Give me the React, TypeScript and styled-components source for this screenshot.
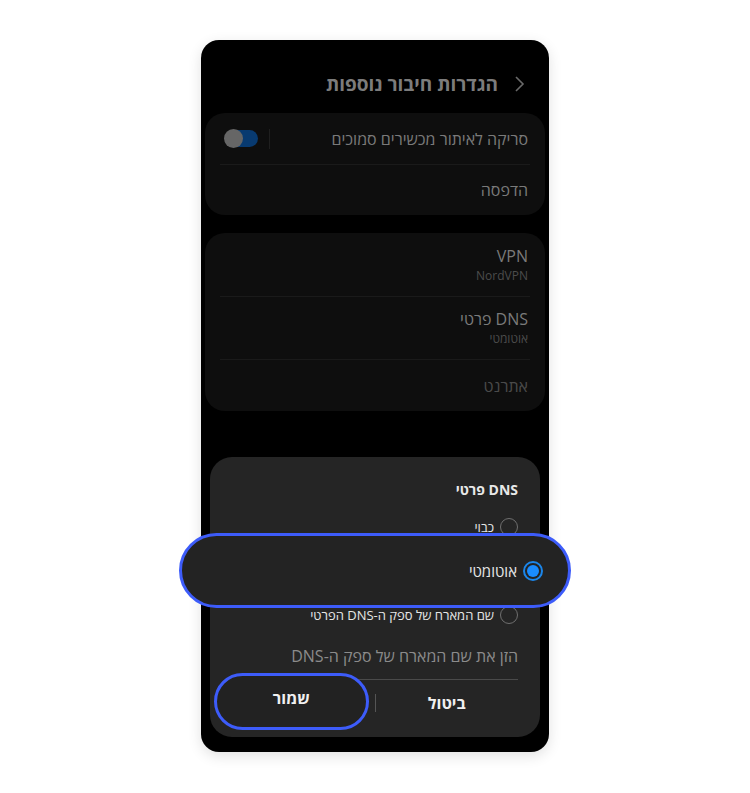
import styled, { createGlobalStyle } from 'styled-components';

const GlobalStyle = createGlobalStyle`
    html, body {
        margin: 0;
        padding: 0;
        background: #ffffff;
    }
    body {
        font-family: 'Open Sans', 'Liberation Sans', 'DejaVu Sans', sans-serif;
    }
`

const Page = styled.div`
    width: 750px;
    height: 793px;
    display: flex;
    justify-content: center;
    padding-top: 40px;
    box-sizing: border-box;
`

const Phone = styled.div`
    width: 348px;
    height: 712px;
    background: #000;
    border-radius: 18px;
    box-shadow: 0 4px 14px rgba(0,0,0,.12);
    direction: rtl;
    display: flex;
    flex-direction: column;
    padding: 28px 4px 15px;
    box-sizing: border-box;
`

const Header = styled.div`
    height: 32px;
    display: flex;
    align-items: center;
    gap: 16px;
    padding-right: 19px;
    margin-bottom: 13px;
`

const HeaderTitle = styled.h1`
    margin: 0;
    font-size: 19px;
    font-weight: 700;
    color: #7c7c7c;
`

const Card = styled.div<{ mb: number }>`
    background: #0e0e0e;
    border-radius: 20px;
    padding: 0 15px;
    margin-bottom: ${props => props.mb}px;
`

const Row = styled.div<{ h: number; last?: boolean }>`
    height: ${props => props.h}px;
    display: flex;
    align-items: center;
    padding: 0 2px 0 5px;
    border-bottom: ${props => props.last ? 'none' : '1px solid #1a1a1a'};
`

const RowText = styled.div`
    flex: 1;
    display: flex;
    flex-direction: column;
    gap: 4px;
`

const RowTitle = styled.span<{ dim?: boolean }>`
    font-size: 16px;
    line-height: 18px;
    color: ${props => props.dim ? '#4a4a4a' : '#7a7a7a'};
`

const RowSub = styled.span`
    font-size: 12px;
    line-height: 14px;
    color: #4c4c4c;
`

const SwitchArea = styled.div`
    display: flex;
    align-items: center;
    gap: 11px;
`

const VSep = styled.div`
    width: 1px;
    height: 20px;
    background: #1f1f1f;
`

const Track = styled.div`
    width: 33px;
    height: 17px;
    border-radius: 9px;
    background: #083a70;
    position: relative;
`

const Thumb = styled.div`
    position: absolute;
    left: -1px;
    top: -1px;
    width: 19px;
    height: 19px;
    border-radius: 50%;
    background: #666;
`

const Sheet = styled.div`
    margin: auto 5px 0;
    height: 280px;
    background: #252525;
    border-radius: 22px;
    padding: 20px 22px 0 22px;
    box-sizing: border-box;
    display: flex;
    flex-direction: column;
`

const SheetTitle = styled.div`
    font-size: 14px;
    font-weight: 700;
    color: #e8e8e8;
    height: 24px;
    display: flex;
    align-items: center;
    margin-bottom: 4px;
`

const Option = styled.div`
    height: 44px;
    display: flex;
    align-items: center;
    gap: 6px;
    position: relative;
`

const Radio = styled.div<{ big?: boolean; on?: boolean }>`
    width: ${props => props.big ? 20 : 18}px;
    height: ${props => props.big ? 20 : 18}px;
    border-radius: 50%;
    box-sizing: border-box;
    border: ${props => props.on ? '2px solid #1b86ea' : '1.5px solid #6f6f6f'};
    display: flex;
    align-items: center;
    justify-content: center;
    &::after {
        content: '';
        display: ${props => props.on ? 'block' : 'none'};
        width: 12px;
        height: 12px;
        border-radius: 50%;
        background: #1a8cff;
    }
`

const OptionLabel = styled.span<{ big?: boolean }>`
    font-size: ${props => props.big ? 15 : 13}px;
    color: #e6e6e6;
`

const Callout = styled.div`
    position: absolute;
    right: -53px;
    left: -53px;
    top: -16px;
    bottom: -15px;
    background: #232323;
    border: 3px solid #3d5cfa;
    border-radius: 40px;
    display: flex;
    align-items: center;
    gap: 6px;
    padding-right: 25px;
    z-index: 2;
`

const Input = styled.div`
    height: 43px;
    border-bottom: 1px solid #4a4a4a;
    display: flex;
    align-items: center;
    font-size: 16px;
    color: #8b8b8b;
    padding-bottom: 4px;
    box-sizing: border-box;
`

const Buttons = styled.div`
    flex: 1;
    display: grid;
    grid-template-columns: 1fr 1px 1fr;
    align-items: center;
    padding-bottom: 12px;
`

const ActionButton = styled.button`
    background: transparent;
    border: none;
    color: #f0f0f0;
    font-family: inherit;
    font-size: 16px;
    font-weight: 700;
    height: 40px;
    position: relative;
`

const ButtonSep = styled.div`
    width: 1px;
    height: 18px;
    background: #555;
`

const ButtonHighlight = styled.div`
    position: absolute;
    left: -18px;
    right: 6px;
    top: -10px;
    bottom: -7px;
    border: 3px solid #3d5cfa;
    border-radius: 30px;
    background: #222;
    display: flex;
    align-items: center;
    justify-content: center;
    padding-bottom: 6px;
    box-sizing: border-box;
`

const Chevron = () => (
    <svg width="12" height="18" viewBox="0 0 12 18">
        <path d="M2 2 L9 9 L2 16" fill="none" stroke="#6a6a6a" strokeWidth="1.6" />
    </svg>
)

export default function App() {
    return (
        <>
            <GlobalStyle />
            <Page>
                <Phone>
                    <Header>
                        <Chevron />
                        <HeaderTitle>הגדרות חיבור נוספות</HeaderTitle>
                    </Header>
                    <Card mb={18}>
                        <Row h={51}>
                            <RowText><RowTitle>סריקה לאיתור מכשירים סמוכים</RowTitle></RowText>
                            <SwitchArea>
                                <VSep />
                                <Track><Thumb /></Track>
                            </SwitchArea>
                        </Row>
                        <Row h={50} last>
                            <RowText><RowTitle>הדפסה</RowTitle></RowText>
                        </Row>
                    </Card>
                    <Card mb={0}>
                        <Row h={63}>
                            <RowText>
                                <RowTitle>VPN</RowTitle>
                                <RowSub>NordVPN</RowSub>
                            </RowText>
                        </Row>
                        <Row h={62}>
                            <RowText>
                                <RowTitle>DNS פרטי</RowTitle>
                                <RowSub>אוטומטי</RowSub>
                            </RowText>
                        </Row>
                        <Row h={51} last>
                            <RowText><RowTitle dim>אתרנט</RowTitle></RowText>
                        </Row>
                    </Card>
                    <Sheet>
                        <SheetTitle>DNS פרטי</SheetTitle>
                        <Option>
                            <Radio />
                            <OptionLabel>כבוי</OptionLabel>
                        </Option>
                        <Option>
                            <Callout>
                                <Radio big on />
                                <OptionLabel big>אוטומטי</OptionLabel>
                            </Callout>
                        </Option>
                        <Option>
                            <Radio />
                            <OptionLabel>שם המארח של ספק ה-DNS הפרטי</OptionLabel>
                        </Option>
                        <Input>הזן את שם המארח של ספק ה-DNS</Input>
                        <Buttons>
                            <ActionButton>ביטול</ActionButton>
                            <ButtonSep />
                            <ActionButton>
                                <ButtonHighlight>שמור</ButtonHighlight>
                            </ActionButton>
                        </Buttons>
                    </Sheet>
                </Phone>
            </Page>
        </>
    );
}
